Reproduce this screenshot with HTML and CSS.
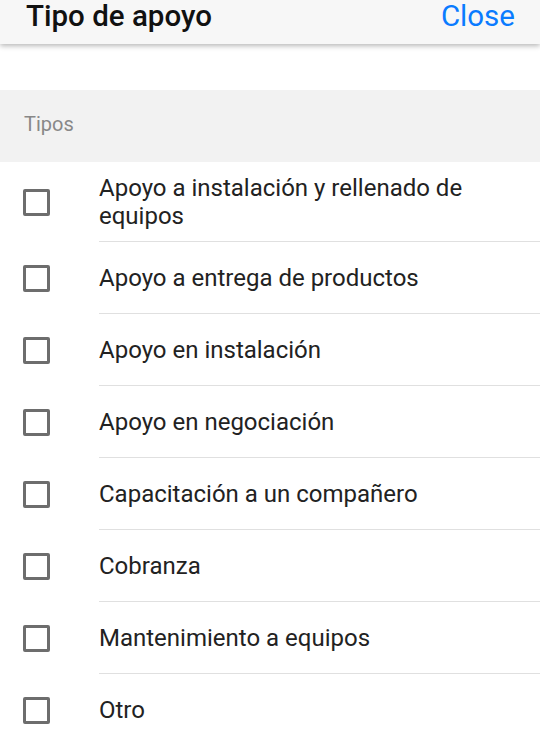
FILE: index.html
```html
<!DOCTYPE html>
<html lang="es">
<head>
<meta charset="utf-8">
<title>Tipo de apoyo</title>
<link rel="stylesheet" href="styles.css">
</head>
<body>
<header class="topbar">
  <h1 class="topbar-title">Tipo de apoyo</h1>
  <button class="topbar-close" type="button">Close</button>
</header>
<div class="spacer"></div>
<section class="group">
  <div class="group-header">Tipos</div>
  <ul class="options">
    <li class="option"><span class="check"></span><span class="label">Apoyo a instalación y rellenado de equipos</span></li>
    <li class="option"><span class="check"></span><span class="label">Apoyo a entrega de productos</span></li>
    <li class="option"><span class="check"></span><span class="label">Apoyo en instalación</span></li>
    <li class="option"><span class="check"></span><span class="label">Apoyo en negociación</span></li>
    <li class="option"><span class="check"></span><span class="label">Capacitación a un compañero</span></li>
    <li class="option"><span class="check"></span><span class="label">Cobranza</span></li>
    <li class="option"><span class="check"></span><span class="label">Mantenimiento a equipos</span></li>
    <li class="option"><span class="check"></span><span class="label">Otro</span></li>
  </ul>
</section>
</body>
</html>
```
FILE: styles.css
```css
* { box-sizing: border-box; }
html, body {
  margin: 0;
  padding: 0;
  background: #fff;
  font-family: Roboto, "Liberation Sans", sans-serif;
  overflow: hidden;
}
.topbar {
  position: relative;
  z-index: 2;
  height: 44px;
  background: #f7f7f7;
  display: flex;
  justify-content: space-between;
  align-items: flex-start;
  padding: 0 25px 0 26px;
  box-shadow: 0 2px 5px rgba(0, 0, 0, 0.28);
}
.topbar-title {
  margin: 0;
  font-size: 29.5px;
  line-height: 32px;
  font-weight: 500;
  color: #111;
}
.topbar-close {
  border: 0;
  background: none;
  padding: 0;
  font-family: inherit;
  font-size: 29.5px;
  line-height: 32px;
  color: #0a7bff;
}
.spacer { height: 46px; }
.group-header {
  height: 72px;
  background: #f2f2f2;
  padding: 23px 0 0 24px;
  font-size: 20px;
  line-height: 23px;
  color: #888;
}
.options {
  list-style: none;
  margin: 0;
  padding: 0;
}
.option {
  display: flex;
  align-items: center;
}
.check {
  flex: none;
  width: 27px;
  height: 27px;
  margin: 0 49px 0 23px;
  border: 3px solid #6d6d6d;
  border-radius: 2px;
}
.label {
  flex: 1;
  min-height: 72px;
  display: flex;
  align-items: center;
  padding: 12px 16px 11px 0;
  border-bottom: 1px solid #e0e0e0;
  font-size: 24px;
  line-height: 28px;
  color: #222;
}
```
